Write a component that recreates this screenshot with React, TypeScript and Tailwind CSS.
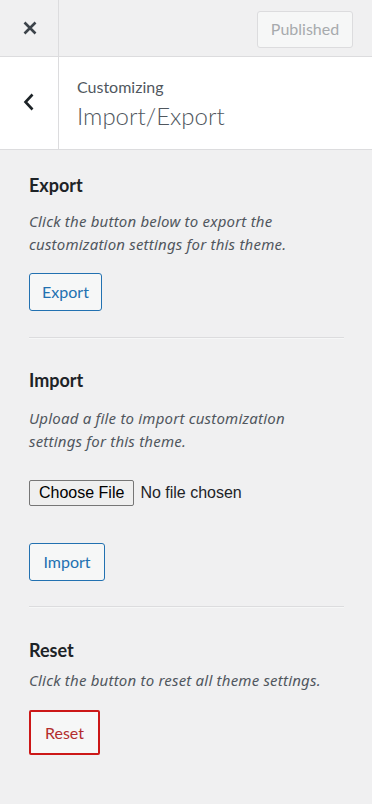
import React from "react";

const font = { fontFamily: "Lato, 'Noto Sans', sans-serif" };
const descFont = { fontFamily: "'Noto Sans', 'Open Sans', sans-serif" };

function Heading({ children, className = "" }: { children: React.ReactNode; className?: string }) {
  return (
    <h3 className={`text-[18px] leading-[24px] font-bold text-[#1d2327] ${className}`}>{children}</h3>
  );
}

function Desc({ children, className = "" }: { children: React.ReactNode; className?: string }) {
  return (
    <p
      className={`text-[15px] leading-[23px] tracking-[0.2px] italic text-[#50575e] whitespace-nowrap ${className}`}
      style={descFont}
    >
      {children}
    </p>
  );
}

export default function App() {
  return (
    <div className="w-[372px] h-[804px] bg-[#f0f0f1] flex flex-col overflow-hidden" style={font}>
      {/* Header */}
      <div className="h-[57px] flex items-stretch border-b border-[#dcdcde] bg-[#f0f0f1] shrink-0">
        <div className="w-[59px] border-r border-[#dcdcde] flex items-center justify-center">
          <svg width="14" height="14" viewBox="0 0 14 14" className="ml-[1px]">
            <path d="M1.5 1.5 L12.5 12.5 M12.5 1.5 L1.5 12.5" stroke="#3c434a" strokeWidth="2.6" strokeLinecap="butt" />
          </svg>
        </div>
        <div className="flex-1 flex items-center justify-end pr-[19px]">
          <div className="w-[96px] h-[37px] mt-[2px] border border-[#dcdcde] bg-[#f6f7f7] rounded-[3px] flex items-center justify-center text-[16px] text-[#a7aaad]">
            Published
          </div>
        </div>
      </div>

      {/* Title section */}
      <div className="h-[93px] flex items-stretch bg-white border-b border-[#dcdcde] shrink-0">
        <div className="w-[59px] border-r border-[#dcdcde] flex items-center justify-center">
          <svg width="12" height="18" viewBox="0 0 12 18" className="-mt-[2px]">
            <path d="M9.5 1.5 L2.5 9 L9.5 16.5" stroke="#1d2327" strokeWidth="2.6" fill="none" strokeLinejoin="miter" />
          </svg>
        </div>
        <div className="flex flex-col pl-[18px] pt-[20px]">
          <span className="text-[16px] leading-[20px] text-[#50575e]">Customizing</span>
          <span className="text-[24px] leading-[34px] font-light text-[#50575e] mt-[2px]">Import/Export</span>
        </div>
      </div>

      {/* Content */}
      <div className="flex flex-col px-[29px] pr-[28px] pt-[23px]">
        <Heading>Export</Heading>
        <Desc className="mt-[13px]">
          Click the button below to export the
          <br />
          customization settings for this theme.
        </Desc>
        <div className="mt-[17px]">
          <button className="w-[73px] h-[38px] border border-[#2271b1] bg-[#f6f7f7] rounded-[3px] text-[16px] text-[#2271b1]">
            Export
          </button>
        </div>
        <div className="mt-[26px] h-px bg-[#dcdcde] border-b border-[#f6f7f7] box-content" />

        <Heading className="mt-[29px]">Import</Heading>
        <Desc className="mt-[15px]">
          Upload a file to import customization
          <br />
          settings for this theme.
        </Desc>
        <div className="mt-[27px] flex items-center h-[26px]" style={{ fontFamily: "'Liberation Sans', Arial, sans-serif" }}>
          <span className="h-[26px] px-[9px] border border-[#767676] bg-[#efefef] rounded-[2px] flex items-center text-[16px] text-black">
            Choose File
          </span>
          <span className="ml-[6px] text-[16px] text-[#1d2327]">No file chosen</span>
        </div>
        <div className="mt-[37px]">
          <button className="w-[76px] h-[38px] border border-[#2271b1] bg-[#f6f7f7] rounded-[3px] text-[16px] text-[#2271b1]">
            Import
          </button>
        </div>
        <div className="mt-[25px] h-px bg-[#dcdcde] border-b border-[#f6f7f7] box-content" />

        <Heading className="mt-[30px]">Reset</Heading>
        <Desc className="mt-[7px]">Click the button to reset all theme settings.</Desc>
        <div className="mt-[18px]">
          <button className="w-[71px] h-[45px] border-2 border-[#cc1818] bg-[#f6f7f7] rounded-[2px] text-[16px] text-[#b32d2e]">
            Reset
          </button>
        </div>
      </div>
    </div>
  );
}
